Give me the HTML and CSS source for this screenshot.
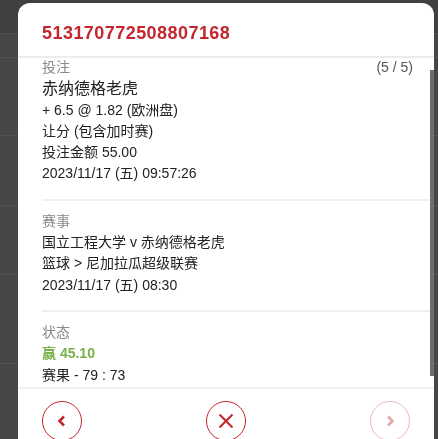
FILE: index.html
```html
<!DOCTYPE html>
<html lang="zh">
<head>
    <meta charset="UTF-8">
    <meta name="viewport" content="width=device-width, initial-scale=1.0">
    <link rel="stylesheet" href="styles.css">
    <title>投注详情</title>
</head>
<body>
    <div class="page">
        <div class="page-top"></div>
        <div class="page-row" style="height: 23px"></div>
        <div class="page-row" style="height: 77px"></div>
        <div class="page-row" style="height: 69px"></div>
        <div class="page-row" style="height: 68px"></div>
        <div class="page-row" style="height: 88px"></div>
    </div>

    <div class="modal">
        <div class="modal-header">513170772508807168</div>
        <div class="modal-body" id="modal-body">
            <div class="section">
                <div class="row">
                    <span class="label">投注</span>
                    <span class="count">(5 / 5)</span>
                </div>
                <div class="line team">赤纳德格老虎</div>
                <div class="line">+ 6.5 @ 1.82 (欧洲盘)</div>
                <div class="line">让分 (包含加时赛)</div>
                <div class="line">投注金额 55.00</div>
                <div class="line">2023/11/17 (五) 09:57:26</div>
            </div>
            <div class="section">
                <div class="label">赛事</div>
                <div class="line">国立工程大学 v 赤纳德格老虎</div>
                <div class="line">篮球 &gt; 尼加拉瓜超级联赛</div>
                <div class="line">2023/11/17 (五) 08:30</div>
            </div>
            <div class="section last">
                <div class="label">状态</div>
                <div class="line win">赢 45.10</div>
                <div class="line">赛果 - 79 : 73</div>
            </div>
        </div>
        <div class="scroll-thumb"></div>
        <div class="modal-footer">
            <button class="circle-btn">
                <svg width="14" height="14" viewBox="0 0 14 14"><path d="M9 2.5 L4.5 7 L9 11.5" fill="none" stroke="#c4262e" stroke-width="2.6"/></svg>
            </button>
            <button class="circle-btn">
                <svg width="16" height="16" viewBox="0 0 16 16"><path d="M1.5 1.5 L14.5 14.5 M14.5 1.5 L1.5 14.5" fill="none" stroke="#c4262e" stroke-width="2"/></svg>
            </button>
            <button class="circle-btn disabled">
                <svg width="14" height="14" viewBox="0 0 14 14"><path d="M5 2.5 L9.5 7 L5 11.5" fill="none" stroke="#e3a7ad" stroke-width="2.6"/></svg>
            </button>
        </div>
    </div>
    <script>
        document.getElementById('modal-body').scrollTop = 13;
    </script>
</body>
</html>
```

FILE: styles.css
```css
html, body {
    margin: 0;
    padding: 0;
    width: 100%;
    height: 100%;
    background: #464646;
    font-family: "Liberation Sans", "Noto Sans CJK SC", sans-serif;
    overflow: hidden;
}

.page-top {
    height: 33px;
    background: #404040;
    border-bottom: 1px solid #525252;
}

.page-row {
    border-bottom: 1px solid #525252;
}

.modal {
    position: fixed;
    left: 18px;
    top: 3px;
    width: 416px;
    background: #fff;
    border-radius: 12px;
    overflow: hidden;
}

.modal-header {
    padding: 19px 24px 12px;
    line-height: 22px;
    font-size: 18px;
    font-weight: bold;
    letter-spacing: 0.45px;
    color: #c4262e;
    border-bottom: 2px solid #ececec;
}

.modal-body {
    height: 329px;
    overflow-y: auto;
    scrollbar-width: none;
}

.modal-body::-webkit-scrollbar {
    display: none;
}

/* thin scrollbar drawn over the right edge of the body */
.scroll-thumb {
    position: absolute;
    top: 67px;
    right: 0;
    width: 4px;
    height: 306px;
    background: #6b6e73;
}

.section {
    margin: 0 4px 0 24px;
    padding: 10px 17px 14px 0;
    border-bottom: 2px solid #efefef;
    font-size: 14px;
    line-height: 21.3px;
    color: #222;
}

.section:first-child {
    padding-top: 12px;
}

.section.last {
    border-bottom: 0;
}

.row {
    display: flex;
    justify-content: space-between;
}

.label {
    color: #888;
}

.count {
    color: #555;
}

.team {
    font-size: 16px;
}

.win {
    color: #78b04a;
    font-weight: bold;
}

.modal-footer {
    display: flex;
    justify-content: space-between;
    padding: 12px 24px;
    border-top: 2px solid #f0f0f0;
}

.circle-btn {
    width: 40px;
    height: 40px;
    border-radius: 50%;
    border: 1px solid #c4262e;
    background: #fff;
    padding: 0;
    display: flex;
    align-items: center;
    justify-content: center;
    cursor: pointer;
}

.circle-btn.disabled {
    border-color: #e8b8bc;
    cursor: default;
}
```
